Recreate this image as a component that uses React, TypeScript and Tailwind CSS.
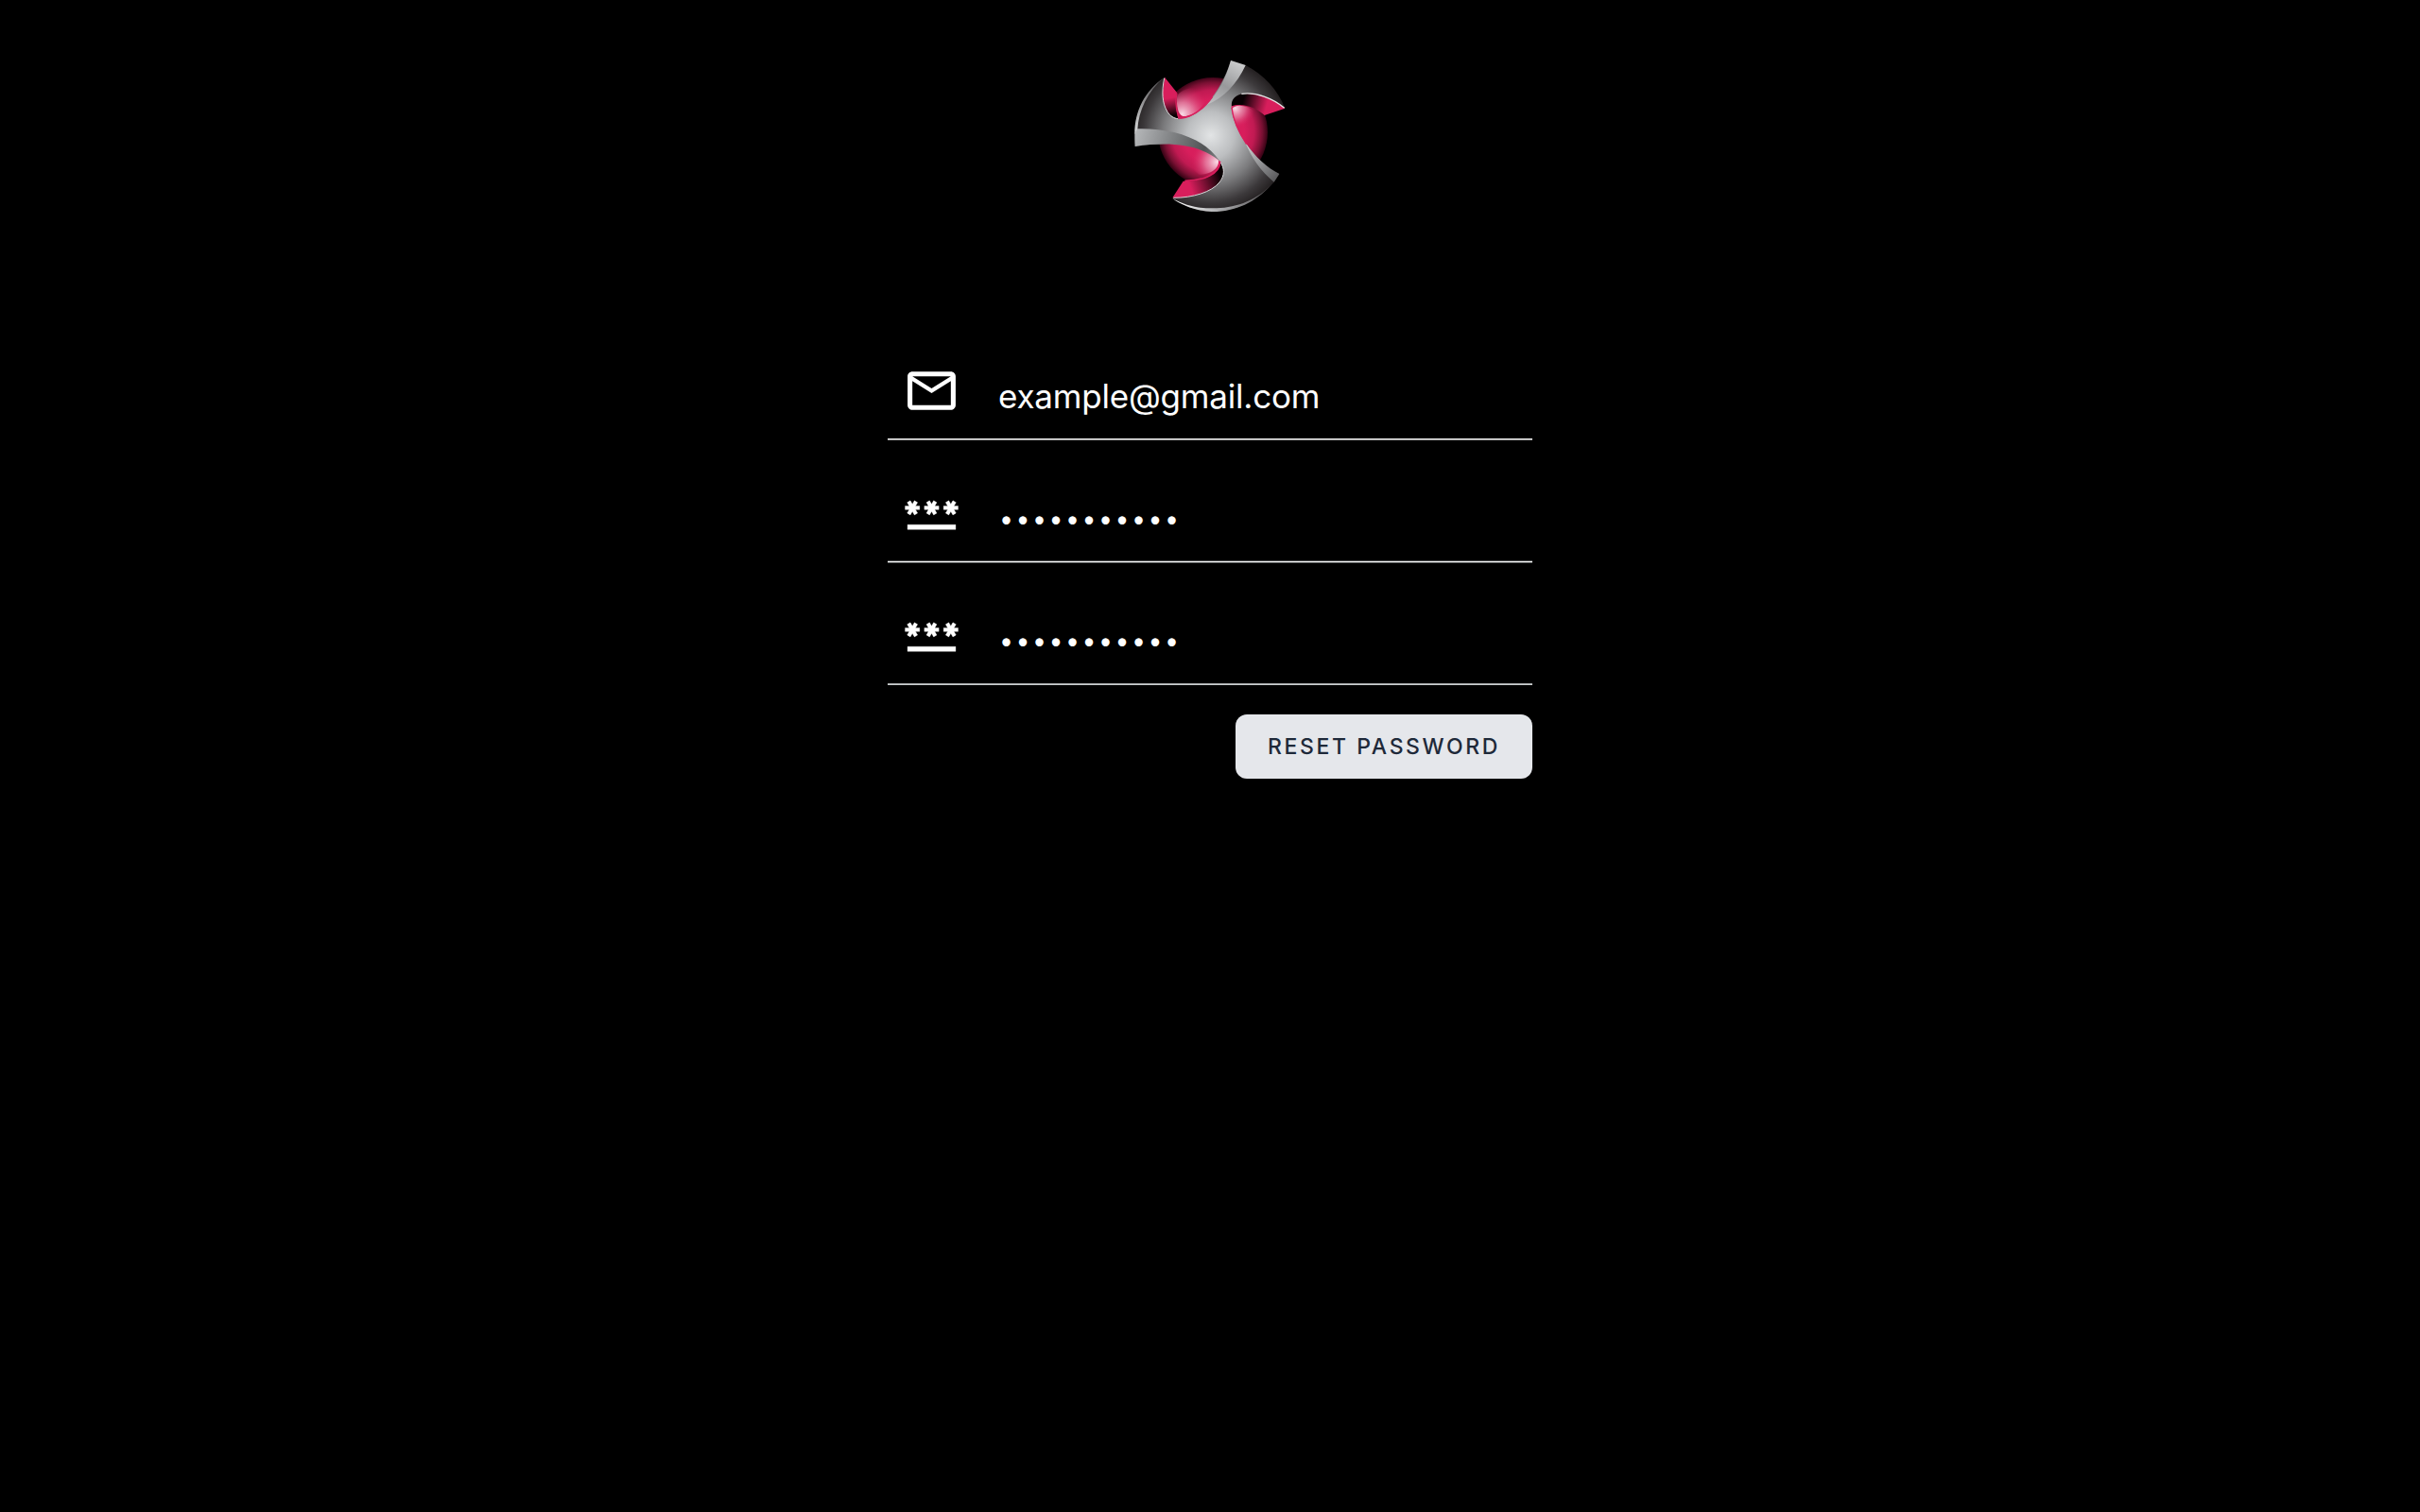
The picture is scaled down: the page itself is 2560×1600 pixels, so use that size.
import { MdOutlineMail, MdPassword } from "react-icons/md";

function Logo() {
  return (
    <svg viewBox="0 0 540 540" className="h-[180px] w-[180px]" aria-label="Logo">
      <defs>
        <radialGradient id="sphere" gradientUnits="userSpaceOnUse" cx="279" cy="256" r="178">
          <stop offset="0.56" stopColor="#d81e5c" />
          <stop offset="0.74" stopColor="#c01a52" />
          <stop offset="0.88" stopColor="#7a1033" />
          <stop offset="1" stopColor="#28000e" />
        </radialGradient>
        <radialGradient id="body" gradientUnits="userSpaceOnUse" cx="272" cy="268" r="250">
          <stop offset="0" stopColor="#e2e4e5" />
          <stop offset="0.3" stopColor="#bcbec0" />
          <stop offset="0.6" stopColor="#7c7c7e" />
          <stop offset="0.85" stopColor="#3c393b" />
          <stop offset="1" stopColor="#231f20" />
        </radialGradient>
        <linearGradient id="facetTop" gradientUnits="userSpaceOnUse" x1="350" y1="35" x2="275" y2="165">
          <stop offset="0" stopColor="#c8c9ca" />
          <stop offset="0.55" stopColor="#98999b" />
          <stop offset="1" stopColor="#bcbec0" />
        </linearGradient>
        <linearGradient id="facetLeft" gradientUnits="userSpaceOnUse" x1="32" y1="270" x2="300" y2="345">
          <stop offset="0" stopColor="#b4b6b8" />
          <stop offset="0.45" stopColor="#7b7d7f" />
          <stop offset="0.8" stopColor="#515355" />
          <stop offset="1" stopColor="#85878a" />
        </linearGradient>
        <linearGradient id="facetRight" gradientUnits="userSpaceOnUse" x1="385" y1="295" x2="488" y2="405">
          <stop offset="0" stopColor="#d2d3d4" />
          <stop offset="0.5" stopColor="#929395" />
          <stop offset="1" stopColor="#565658" />
        </linearGradient>
        <linearGradient id="rim" gradientUnits="userSpaceOnUse" x1="151" y1="470" x2="470" y2="420">
          <stop offset="0" stopColor="#ffffff" />
          <stop offset="0.4" stopColor="#b2b3b5" />
          <stop offset="1" stopColor="#4c4a4c" />
        </linearGradient>
        <linearGradient id="rimLeft" gradientUnits="userSpaceOnUse" x1="38" y1="250" x2="124" y2="84">
          <stop offset="0" stopColor="#d0d1d2" />
          <stop offset="1" stopColor="#4c4a4c" />
        </linearGradient>
        <linearGradient id="panelLeft" gradientUnits="userSpaceOnUse" x1="135" y1="130" x2="150" y2="210">
          <stop offset="0.25" stopColor="#d81e5c" />
          <stop offset="0.95" stopColor="#0a0003" />
        </linearGradient>
        <linearGradient id="panelRight" gradientUnits="userSpaceOnUse" x1="370" y1="155" x2="475" y2="185">
          <stop offset="0.05" stopColor="#080003" />
          <stop offset="0.75" stopColor="#d81e5c" />
        </linearGradient>
        <linearGradient id="panelBottom" gradientUnits="userSpaceOnUse" x1="190" y1="435" x2="308" y2="395">
          <stop offset="0.15" stopColor="#d81e5c" />
          <stop offset="0.95" stopColor="#0a0003" />
        </linearGradient>
        <radialGradient id="glowLeft" gradientUnits="userSpaceOnUse" cx="182" cy="200" r="92">
          <stop offset="0" stopColor="#f9dbe6" />
          <stop offset="0.4" stopColor="#e98fae" stopOpacity="0.75" />
          <stop offset="1" stopColor="#d81e5c" stopOpacity="0" />
        </radialGradient>
        <radialGradient id="glowRight" gradientUnits="userSpaceOnUse" cx="350" cy="182" r="78">
          <stop offset="0" stopColor="#f9dbe6" />
          <stop offset="0.4" stopColor="#e98fae" stopOpacity="0.6" />
          <stop offset="0.8" stopColor="#d81e5c" stopOpacity="0" />
        </radialGradient>
        <radialGradient id="glowBottom" gradientUnits="userSpaceOnUse" cx="292" cy="352" r="92">
          <stop offset="0" stopColor="#f9dbe6" />
          <stop offset="0.4" stopColor="#e98fae" stopOpacity="0.7" />
          <stop offset="0.9" stopColor="#d81e5c" stopOpacity="0" />
        </radialGradient>
      </defs>

      <circle cx="279" cy="258" r="174" fill="url(#sphere)" />
      <path d="M166 140 C190 110 250 110 278 125 C255 170 225 208 184 207 C168 202 162 170 166 140Z" fill="url(#glowLeft)" />
      <path d="M339 184 C350 168 385 170 412 192 C425 225 420 290 404 312 C372 285 345 225 339 184Z" fill="url(#glowRight)" />
      <path d="M190 298 C240 305 285 330 297 346 C300 372 275 392 235 392 C200 370 190 330 190 298Z" fill="url(#glowBottom)" />

      <path d="M126 83 L165 132 C160 160 162 190 170 216 C150 214 118 190 118 140Z" fill="url(#panelLeft)" />
      <path d="M338 175 C335 150 350 130 390 132 C440 135 480 155 508 182 L443 204 C420 182 375 162 338 175Z" fill="url(#panelRight)" />
      <path d="M185 413 C245 416 295 395 304 352 C325 375 318 405 290 430 C255 458 205 470 151 466Z" fill="url(#panelBottom)" />

      <path
        d="M336 30 L383 45 C440 74 485 122 508 182 C468 148 415 130 378 135 C350 139 337 152 338 178 C340 215 360 258 385 295 C415 338 450 370 490 390 L473 416 C425 475 350 510 275 510 C230 508 188 494 151 468 C210 467 270 449 298 420 C320 395 318 366 292 340 C250 296 160 284 32 303 C28 205 62 130 126 83 C115 130 118 165 135 193 C148 212 168 218 190 214 C250 196 308 120 336 30Z"
        fill="url(#body)"
      />
      <path d="M336 30 L383 45 C355 105 315 148 258 172 C295 135 320 85 336 30Z" fill="url(#facetTop)" />
      <path d="M31 262 L40 247 C140 244 250 272 300 349 C240 298 150 286 32 303 C31 290 31 275 31 262Z" fill="url(#facetLeft)" />
      <path d="M382 290 C412 335 450 370 490 390 L473 416 C430 380 400 335 382 290Z" fill="url(#facetRight)" />
      <path d="M151 468 C190 490 230 499 275 499 C340 500 410 481 462 426 C415 480 350 511 275 510 C225 507 180 490 151 468Z" fill="url(#rim)" />
      <path d="M31 264 C30 190 65 125 124 84 C70 130 44 190 40 248Z" fill="url(#rimLeft)" />

      <g fill="none">
        <path d="M125 86 C116 130 118 165 135 193 C144 207 156 214 168 215" stroke="#d8d9da" strokeWidth="3" />
        <path d="M370 136 C415 129 470 150 506 181" stroke="#e4e4e5" strokeWidth="4" />
        <path d="M154 466 C215 466 275 448 300 417 C318 394 316 372 303 353" stroke="#d5d6d7" strokeWidth="3" />
        <path d="M165 134 C158 165 163 190 171 213 C215 211 252 182 278 145" stroke="#d81e5c" strokeWidth="4" />
        <path d="M339 180 C343 216 362 260 386 296" stroke="#d81e5c" strokeWidth="4" />
        <path d="M190 412 C250 412 302 390 302 350" stroke="#d81e5c" strokeWidth="5" />
      </g>
    </svg>
  );
}

const BULLETS = "•".repeat(11);

function PasswordRow() {
  return (
    <div className="flex h-[81px]">
      <MdPassword className="ml-4 size-[61px] shrink-0 [&>path:last-child]:stroke-[0.15]" />
      <span className="ml-[42px] mt-[14px] font-[Lato,sans-serif] text-[22.5px] leading-[48px] tracking-[4.45px]">
        {BULLETS}
      </span>
    </div>
  );
}

export default function App() {
  return (
    <main className="flex min-h-screen flex-col items-center bg-black pt-[54px] font-[Inter,sans-serif] text-white">
      <Logo />
      <form className="mt-[149px] flex w-[682px] flex-col">
        <div className="flex h-[81px]">
          <MdOutlineMail className="ml-4 size-[61px] shrink-0" />
          <span className="ml-[40px] mt-[12px] text-[35px] leading-[48px] tracking-[-0.2px]">example@gmail.com</span>
        </div>
        <div className="h-[2px] border-b border-[#8e8e8e] bg-white" />
        <div className="mt-[46px]">
          <PasswordRow />
        </div>
        <div className="h-[3px] border-y border-[#505253] bg-white" />
        <div className="mt-[45px]">
          <PasswordRow />
        </div>
        <div className="mt-px h-[2px] border-b border-[#c9cccd] bg-[#a5a8a9]" />
        <button
          type="button"
          className="mt-[31px] flex h-[68px] w-[314px] items-center justify-center self-end rounded-[12px] bg-gray-200 text-[23px] font-medium tracking-[2.6px] text-gray-800"
        >
          RESET PASSWORD
        </button>
      </form>
    </main>
  );
}
